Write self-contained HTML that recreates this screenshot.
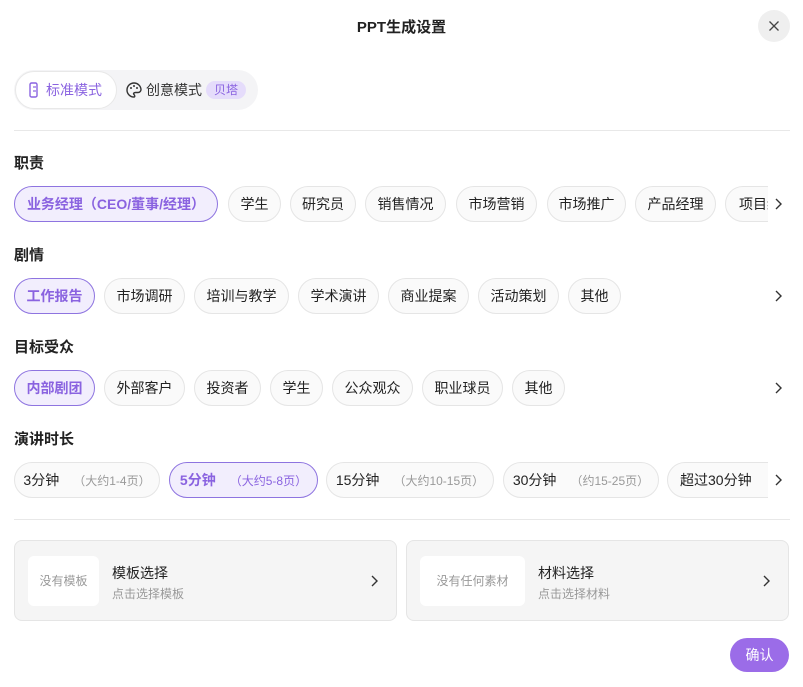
<!DOCTYPE html><html><head><meta charset="utf-8"><style>
*{box-sizing:border-box;margin:0;padding:0}
body{width:803px;height:687px;background:#fff;font-family:"Liberation Sans","Noto Sans CJK SC",sans-serif;color:#222;position:relative;overflow:hidden}
.a{position:absolute}
.title{left:0;width:803px;top:16px;text-align:center;font-size:15px;font-weight:bold}
.close{left:758px;top:10px;width:32px;height:32px;border-radius:50%;background:#efefef}
.tog{left:14px;top:70px;width:244px;height:40px;border-radius:20px;background:#f4f4f6}
.sel{left:15px;top:71px;width:102px;height:38px;border-radius:19px;background:#fff;border:1px solid #e8e8e8;color:#8a63e0;font-size:14px;line-height:36px;padding-left:30px}
.cre{left:146px;top:71px;line-height:38px;font-size:14px;color:#333}
.beta{left:206px;top:81px;height:18px;width:40px;border-radius:9px;background:#e5dcfb;color:#8a63e0;font-size:12px;line-height:18px;text-align:center}
.hr{left:14px;width:776px;height:1px;background:#e8e8e8}
.lab{left:14px;font-size:15px;font-weight:bold}
.c{height:36px;border-radius:18px;background:#fafafa;border:1px solid #e5e5e5;font-size:14px;line-height:34px;text-align:center;white-space:nowrap;overflow:hidden}
.s{background:#f2eefd;border-color:#8e74e0;color:#8a63e0;font-weight:bold}
.g{color:#999;font-size:12px;font-weight:normal;margin-left:14px}
.arr{width:22px;background:#fff;height:36px}
.card{top:540px;height:81px;width:383px;background:#f5f5f5;border:1px solid #e5e5e5;border-radius:8px}
.thumb{top:15px;left:13px;width:71px;height:50px;background:#fff;border-radius:6px;font-size:12px;color:#999;text-align:center;line-height:50px}
.ok{left:730px;top:638px;width:59px;height:34px;border-radius:17px;background:#9b6ce8;color:#fff;font-size:14px;text-align:center;line-height:34px}
</style></head><body>
<div class="a title">PPT生成设置</div>
<div class="a close"><svg width="32" height="32"><path d="M11.5 11.5l9 9M20.5 11.5l-9 9" stroke="#444" stroke-width="1.3"/></svg></div>
<div class="a tog"></div>
<div class="a sel">标准模式</div>
<svg class="a" style="left:29px;top:82px" width="10" height="16"><rect x="1" y="1" width="7" height="14" rx="1.5" fill="none" stroke="#8a63e0" stroke-width="1.4"/><line x1="4" y1="5" x2="7" y2="5" stroke="#8a63e0" stroke-width="1.2"/><line x1="4" y1="9" x2="7" y2="9" stroke="#8a63e0" stroke-width="1.2"/></svg>
<svg class="a" style="left:125px;top:81px" width="18" height="18"><path d="M9 2a7 7 0 1 0 0 14c1 0 1-1.5 0-2.5s0-2 1.5-2H13a3 3 0 0 0 3-3A7 7 0 0 0 9 2z" fill="none" stroke="#333" stroke-width="1.4"/><circle cx="6" cy="7" r="1" fill="#333"/><circle cx="9" cy="5" r="1" fill="#333"/><circle cx="12" cy="7" r="1" fill="#333"/></svg>
<div class="a cre">创意模式</div>
<div class="a beta">贝塔</div>
<div class="a hr" style="top:130px"></div>

<div class="a lab" style="top:152px">职责</div>
<div class="a c s" style="left:14px;top:186px;width:204px">业务经理（CEO/董事/经理）</div>
<div class="a c" style="left:228px;top:186px;width:53px">学生</div>
<div class="a c" style="left:290px;top:186px;width:66px">研究员</div>
<div class="a c" style="left:365px;top:186px;width:81px">销售情况</div>
<div class="a c" style="left:456px;top:186px;width:81px">市场营销</div>
<div class="a c" style="left:547px;top:186px;width:79px">市场推广</div>
<div class="a c" style="left:635px;top:186px;width:81px">产品经理</div>
<div class="a c" style="left:725px;top:186px;width:60px;text-align:left;padding-left:13px">项目经理</div>
<div class="a arr" style="left:768px;top:186px"><svg width="22" height="36"><path d="M8 13l5 5-5 5" fill="none" stroke="#333" stroke-width="1.4"/></svg></div>

<div class="a lab" style="top:244px">剧情</div>
<div class="a c s" style="left:14px;top:278px;width:81px">工作报告</div>
<div class="a c" style="left:104px;top:278px;width:81px">市场调研</div>
<div class="a c" style="left:194px;top:278px;width:95px">培训与教学</div>
<div class="a c" style="left:298px;top:278px;width:81px">学术演讲</div>
<div class="a c" style="left:388px;top:278px;width:81px">商业提案</div>
<div class="a c" style="left:478px;top:278px;width:81px">活动策划</div>
<div class="a c" style="left:568px;top:278px;width:53px">其他</div>
<div class="a arr" style="left:768px;top:278px"><svg width="22" height="36"><path d="M8 13l5 5-5 5" fill="none" stroke="#333" stroke-width="1.4"/></svg></div>

<div class="a lab" style="top:336px">目标受众</div>
<div class="a c s" style="left:14px;top:370px;width:81px">内部剧团</div>
<div class="a c" style="left:104px;top:370px;width:81px">外部客户</div>
<div class="a c" style="left:194px;top:370px;width:67px">投资者</div>
<div class="a c" style="left:270px;top:370px;width:53px">学生</div>
<div class="a c" style="left:332px;top:370px;width:81px">公众观众</div>
<div class="a c" style="left:422px;top:370px;width:81px">职业球员</div>
<div class="a c" style="left:512px;top:370px;width:53px">其他</div>
<div class="a arr" style="left:768px;top:370px"><svg width="22" height="36"><path d="M8 13l5 5-5 5" fill="none" stroke="#333" stroke-width="1.4"/></svg></div>

<div class="a lab" style="top:428px">演讲时长</div>
<div class="a c" style="left:14px;top:462px;width:146px">3分钟<span class="g">（大约1-4页）</span></div>
<div class="a c s" style="left:169px;top:462px;width:149px">5分钟<span class="g" style="color:#8a63e0">（大约5-8页）</span></div>
<div class="a c" style="left:326px;top:462px;width:168px">15分钟<span class="g">（大约10-15页）</span></div>
<div class="a c" style="left:503px;top:462px;width:156px">30分钟<span class="g">（约15-25页）</span></div>
<div class="a c" style="left:667px;top:462px;width:120px;text-align:left;padding-left:12px">超过30分钟</div>
<div class="a arr" style="left:768px;top:462px"><svg width="22" height="36"><path d="M8 13l5 5-5 5" fill="none" stroke="#333" stroke-width="1.4"/></svg></div>
<div class="a hr" style="top:519px"></div>

<div class="a card" style="left:14px"><div class="a thumb">没有模板</div><div class="a" style="left:97px;top:22px;font-size:14px">模板选择</div><div class="a" style="left:97px;top:44px;font-size:12px;color:#999">点击选择模板</div><svg class="a" style="left:354px;top:31px" width="12" height="18"><path d="M3 4l5 5-5 5" fill="none" stroke="#333" stroke-width="1.4"/></svg></div>
<div class="a card" style="left:406px"><div class="a thumb" style="width:105px">没有任何素材</div><div class="a" style="left:131px;top:22px;font-size:14px">材料选择</div><div class="a" style="left:131px;top:44px;font-size:12px;color:#999">点击选择材料</div><svg class="a" style="left:354px;top:31px" width="12" height="18"><path d="M3 4l5 5-5 5" fill="none" stroke="#333" stroke-width="1.4"/></svg></div>
<div class="a ok">确认</div>
</body></html>
